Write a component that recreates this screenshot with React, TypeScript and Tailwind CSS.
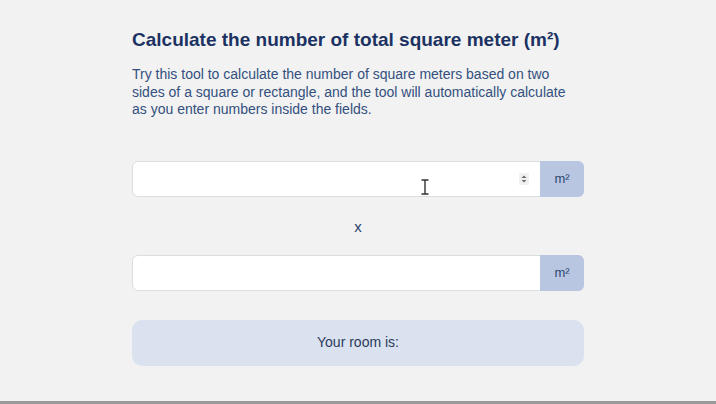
function UnitInput({ spinner }: { spinner?: boolean }) {
  return (
    <div className="flex h-[36px] w-full rounded-[6px] border border-[#dcdde2] bg-white">
      <div className="relative flex flex-1 items-center">
        {spinner && (
          <svg className="absolute right-[11px] top-[11px]" width="10" height="12" viewBox="0 0 10 12">
            <rect x="0" y="0" width="10" height="12" fill="#f1f1f1" />
            <path d="M2.5 5 L5 2.5 L7.5 5 Z" fill="#6b6b6b" />
            <path d="M2.5 7 L5 9.5 L7.5 7 Z" fill="#6b6b6b" />
          </svg>
        )}
      </div>
      <div className="-my-px -mr-px flex w-[44px] items-center justify-center rounded-r-[6px] bg-[#b8c6e2] text-[13px] text-[#2f4670]">
        m²
      </div>
    </div>
  )
}

export default function App() {
  return (
    <div className="flex h-[404px] w-[716px] flex-col bg-[#f2f2f2] font-['Liberation_Sans',Arial,sans-serif]">
      <div className="flex-1 px-[132px] pt-[28px]">
        <h1 className="whitespace-nowrap text-[19px] font-bold leading-[24px] text-[#1c3263]">
          Calculate the number of total square meter (m²)
        </h1>
        <p className="mt-[14px] text-[14px] leading-[17.5px] text-[#33507e]">
          Try this tool to calculate the number of square meters based on two sides of a square or rectangle, and the tool will automatically calculate as you enter numbers inside the fields.
        </p>
        <div className="relative mt-[42px]">
          <UnitInput spinner />
          <svg className="absolute left-[288px] top-[18px]" width="10" height="16" viewBox="0 0 10 16">
            <path d="M1.5 1 H8.5 M5 1 V15 M1.5 15 H8.5" stroke="#333" strokeWidth="1.4" fill="none" />
          </svg>
        </div>
        <div className="flex h-[58px] items-center justify-center pt-[4px] text-[15px] text-[#2c4270]">x</div>
        <UnitInput />
        <div className="mt-[29px] flex h-[46px] items-center justify-center rounded-[10px] bg-[#dbe2ef] text-[14px] text-[#2a3a5c]">
          Your room is:
        </div>
      </div>
      <div className="h-[3px] bg-[#9a9a9a]" />
    </div>
  )
}
